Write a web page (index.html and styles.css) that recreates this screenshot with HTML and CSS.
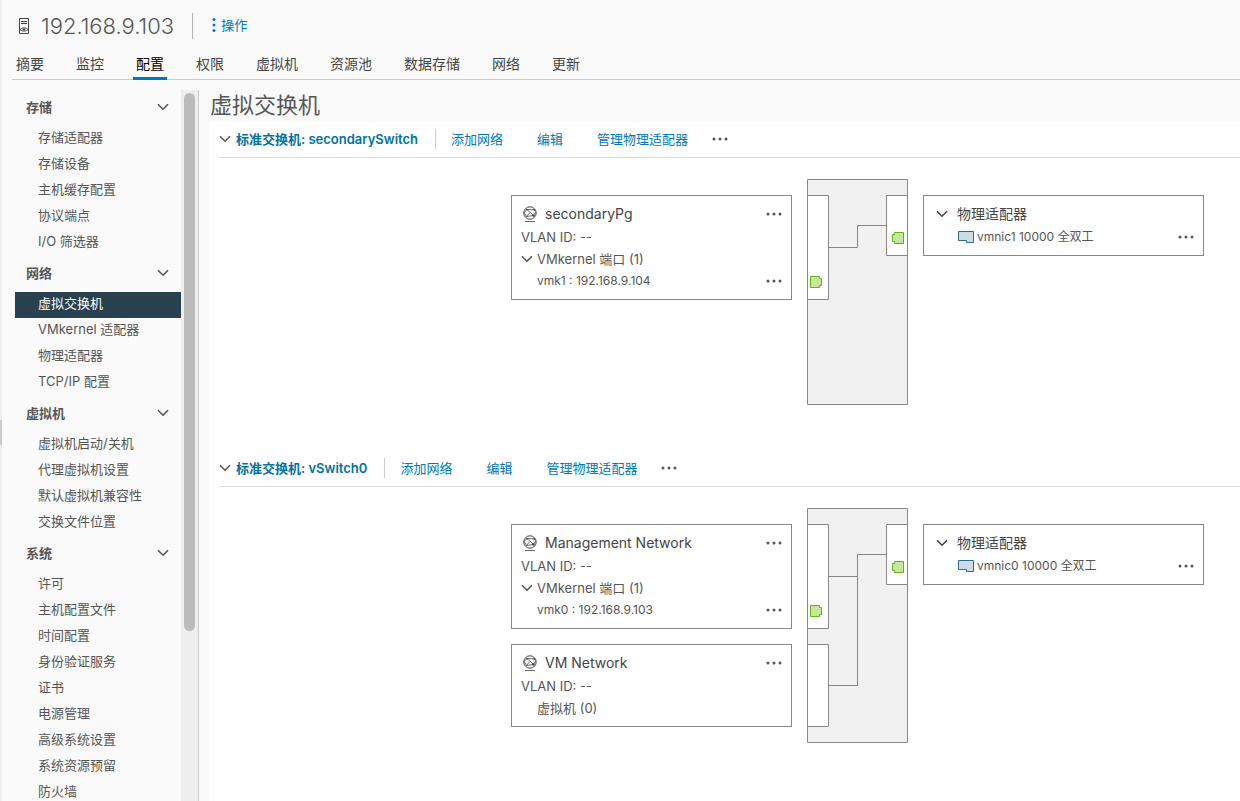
FILE: index.html
```html
<!DOCTYPE html>
<html lang="zh-CN">
<head>
<meta charset="utf-8">
<title>192.168.9.103 - 虚拟交换机</title>
<link rel="stylesheet" href="styles.css">
</head>
<body>
<svg class="defs" aria-hidden="true">
  <symbol id="chevron" viewBox="0 0 12 8"><path d="M1 1.2 6 6.2 11 1.2" fill="none" stroke="currentColor" stroke-width="1.6"/></symbol>
  <symbol id="dots" viewBox="0 0 16 4"><circle cx="2" cy="2" r="1.5"/><circle cx="8" cy="2" r="1.5"/><circle cx="14" cy="2" r="1.5"/></symbol>
  <symbol id="net" viewBox="0 0 16 16"><g fill="none" stroke="currentColor"><circle cx="8" cy="7" r="6.2" stroke-width="1"/><path d="M2 6.500 5 3.500 11.500 9.500M5 3.500 12.500 3.800M2 6.500 4.500 10.500 11.500 9.500 13.800 6M4.500 10.500 8 6.500" stroke-width=".8"/><path d="M3 15.500h10" stroke-width=".8"/></g><g fill="currentColor"><circle cx="5" cy="3.600" r=".9"/><circle cx="12.300" cy="4" r=".9"/><circle cx="11.500" cy="9.500" r="1.200"/></g></symbol>
  <symbol id="nic" viewBox="0 0 16 12"><path d="M.5.5h15v11H8.5v-2h-8z" fill="#cddce4" stroke="#2d6d8d"/></symbol>
  <symbol id="port" viewBox="0 0 12 12"><path d="M.5.5h9v2h2v7h-2v2h-9z" fill="#c7e59c" stroke="#60b515"/></symbol>
</svg>
<div class="app">
  <div class="edge"><span class="edge-grip"></span></div>
  <header class="head">
    <svg class="host-icon" viewBox="0 0 12 18" aria-hidden="true"><g fill="none" stroke="#454545"><path d="M1.500 1.500h9v15h-9z"/><path d="M3 4.500h6M3 6.500h6"/><path d="M1.800 12.500Q6 9 10.200 12.500 6 16 1.800 12.500z" stroke-width=".8"/></g><circle cx="6" cy="12.500" r="1.300" fill="#454545"/></svg>
    <h1>192.168.9.103</h1>
    <button class="actions" type="button"><svg viewBox="0 0 4 16" aria-hidden="true"><circle cx="2" cy="2.500" r="1.500"/><circle cx="2" cy="8" r="1.500"/><circle cx="2" cy="13.500" r="1.500"/></svg>操作</button>
  </header>
  <nav class="tabs">
    <button type="button">摘要</button>
    <button type="button">监控</button>
    <button type="button" class="active">配置</button>
    <button type="button">权限</button>
    <button type="button">虚拟机</button>
    <button type="button">资源池</button>
    <button type="button">数据存储</button>
    <button type="button">网络</button>
    <button type="button">更新</button>
  </nav>
  <div class="body">
    <aside class="side">
      <nav class="tree">
        <button type="button" class="group">存储<svg class="chev"><use href="#chevron"/></svg></button>
        <a href="#">存储适配器</a><a href="#">存储设备</a><a href="#">主机缓存配置</a><a href="#">协议端点</a><a href="#">I/O 筛选器</a>
        <button type="button" class="group">网络<svg class="chev"><use href="#chevron"/></svg></button>
        <a href="#" class="selected">虚拟交换机</a><a href="#">VMkernel 适配器</a><a href="#">物理适配器</a><a href="#">TCP/IP 配置</a>
        <button type="button" class="group">虚拟机<svg class="chev"><use href="#chevron"/></svg></button>
        <a href="#">虚拟机启动/关机</a><a href="#">代理虚拟机设置</a><a href="#">默认虚拟机兼容性</a><a href="#">交换文件位置</a>
        <button type="button" class="group">系统<svg class="chev"><use href="#chevron"/></svg></button>
        <a href="#">许可</a><a href="#">主机配置文件</a><a href="#">时间配置</a><a href="#">身份验证服务</a><a href="#">证书</a><a href="#">电源管理</a><a href="#">高级系统设置</a><a href="#">系统资源预留</a><a href="#">防火墙</a>
      </nav>
      <div class="track"><div class="thumb"></div></div>
    </aside>
    <main class="main">
      <h2>虚拟交换机</h2>
      <div class="panel">
        <section class="switch">
          <div class="bar">
            <button type="button" class="name"><svg class="chev"><use href="#chevron"/></svg>标准交换机: secondarySwitch</button>
            <div class="links">
              <button type="button">添加网络</button>
              <button type="button">编辑</button>
              <button type="button">管理物理适配器</button>
              <button type="button" class="more" aria-label="更多"><svg class="dots"><use href="#dots"/></svg></button>
            </div>
          </div>
          <div class="diagram">
            <div class="cards">
              <article class="card">
                <h3><svg class="net"><use href="#net"/></svg>secondaryPg<button type="button" class="more" aria-label="更多"><svg class="dots"><use href="#dots"/></svg></button></h3>
                <p>VLAN ID: --</p>
                <p><svg class="chev"><use href="#chevron"/></svg>VMkernel 端口 (1)</p>
                <p class="port small">vmk1 : 192.168.9.104<button type="button" class="more" aria-label="更多"><svg class="dots"><use href="#dots"/></svg></button></p>
              </article>
            </div>
            <svg class="fabric fabric-short" viewBox="0 0 101 226" aria-hidden="true">
              <g class="outline"><path class="case" d="M.5.5h100v225H.5z"/><path class="slot" d="M.5 16.500h21v104H.5zM100.500 16.500h-21v60h21z"/><path class="wire" d="M21.500 68.500h29v-22h29"/></g>
              <use href="#port" x="3" y="97" width="12" height="12"/>
              <use href="#port" transform="translate(97 53) scale(-1 1)" width="12" height="12"/>
            </svg>
            <div class="cards">
              <article class="card">
                <h3 class="adapters"><svg class="chev"><use href="#chevron"/></svg>物理适配器</h3>
                <p class="nic-row small"><svg class="nic"><use href="#nic"/></svg>vmnic1 10000 全双工<button type="button" class="more" aria-label="更多"><svg class="dots"><use href="#dots"/></svg></button></p>
              </article>
            </div>
          </div>
        </section>
        <section class="switch">
          <div class="bar">
            <button type="button" class="name"><svg class="chev"><use href="#chevron"/></svg>标准交换机: vSwitch0</button>
            <div class="links">
              <button type="button">添加网络</button>
              <button type="button">编辑</button>
              <button type="button">管理物理适配器</button>
              <button type="button" class="more" aria-label="更多"><svg class="dots"><use href="#dots"/></svg></button>
            </div>
          </div>
          <div class="diagram">
            <div class="cards">
              <article class="card">
                <h3><svg class="net"><use href="#net"/></svg>Management Network<button type="button" class="more" aria-label="更多"><svg class="dots"><use href="#dots"/></svg></button></h3>
                <p>VLAN ID: --</p>
                <p><svg class="chev"><use href="#chevron"/></svg>VMkernel 端口 (1)</p>
                <p class="port small">vmk0 : 192.168.9.103<button type="button" class="more" aria-label="更多"><svg class="dots"><use href="#dots"/></svg></button></p>
              </article>
              <article class="card">
                <h3><svg class="net"><use href="#net"/></svg>VM Network<button type="button" class="more" aria-label="更多"><svg class="dots"><use href="#dots"/></svg></button></h3>
                <p>VLAN ID: --</p>
                <p class="port">虚拟机 (0)</p>
              </article>
            </div>
            <svg class="fabric fabric-tall" viewBox="0 0 101 235" aria-hidden="true">
              <g class="outline"><path class="case" d="M.5.5h100v234H.5z"/><path class="slot" d="M.5 16.500h21v104H.5zM.5 136.500h21v82H.5zM100.500 16.500h-21v60h21z"/><path class="wire" d="M21.500 68.500h29M21.500 177.500h29v-131h29"/></g>
              <use href="#port" x="3" y="97" width="12" height="12"/>
              <use href="#port" transform="translate(97 53) scale(-1 1)" width="12" height="12"/>
            </svg>
            <div class="cards">
              <article class="card">
                <h3 class="adapters"><svg class="chev"><use href="#chevron"/></svg>物理适配器</h3>
                <p class="nic-row small"><svg class="nic"><use href="#nic"/></svg>vmnic0 10000 全双工<button type="button" class="more" aria-label="更多"><svg class="dots"><use href="#dots"/></svg></button></p>
              </article>
            </div>
          </div>
        </section>
      </div>
    </main>
  </div>
</div>
</body>
</html>
```
FILE: styles.css
```css
* { box-sizing: border-box; }
body {
  margin: 0;
  background: #fafafa;
  color: #565656;
  font: 13px/22px Inter, "Noto Sans CJK SC", sans-serif;
}
h1, h2, h3, p { margin: 0; font-weight: 400; }
button {
  border: 0;
  padding: 0;
  background: none;
  color: inherit;
  font: inherit;
  cursor: pointer;
}
a { color: inherit; text-decoration: none; }
svg { flex: none; }
.defs { display: none; }
.chev { width: 12px; height: 8px; }
.dots { display: block; width: 16px; height: 4px; fill: #565656; }
.net { width: 16px; height: 16px; margin-right: 7px; }
.nic { width: 16px; height: 12px; margin-right: 3px; }

.app {
  position: relative;
  display: flex;
  flex-direction: column;
  height: 100vh;
  overflow: hidden;
}
.edge {
  position: absolute;
  inset: 0 auto 0 0;
  display: flex;
  align-items: center;
  width: 2px;
  padding-top: 64px;
  background: #eee;
}
.edge-grip { width: 2px; height: 25px; background: #ccc; }

.head { display: flex; align-items: center; height: 50px; padding: 2px 18px 0; }
.host-icon { width: 12px; height: 18px; margin-right: 11px; }
h1 { font-size: 22px; line-height: 26px; font-weight: 300; }
.actions {
  display: flex;
  align-items: center;
  gap: 5px;
  height: 26px;
  margin-left: 18px;
  padding: 0 0 2px 19px;
  border-left: 1px solid #b3b3b3;
  color: #0079b8;
}
.actions svg { width: 4px; height: 16px; fill: currentColor; }

.tabs {
  display: flex;
  gap: 26px;
  height: 30px;
  margin-left: 12px;
  padding-left: 1px;
  border-bottom: 1px solid #ccc;
  flex: none;
}
.tabs button {
  height: 30px;
  padding: 0 3px;
  border-bottom: 3px solid transparent;
  font-size: 14px;
  line-height: 27px;
  color: #454545;
}
.tabs .active { border-color: #0079b8; color: #000; }

.body { display: flex; flex: 1; min-height: 0; padding-top: 10px; }
.side { display: flex; flex: none; width: 199px; padding-left: 15px; border-right: 1px solid #ccc; }
.tree { flex: 1; overflow: hidden; }
.tree a { display: block; height: 26px; padding-left: 23px; }
.tree .selected { background: #29404f; color: #fff; }
.group {
  display: flex;
  align-items: center;
  justify-content: space-between;
  width: 100%;
  height: 36px;
  padding: 0 12px 2px 11px;
  font-weight: 600;
}
.track { width: 17px; padding: 3px 3px 0; background: #eee; }
.thumb { width: 11px; height: 76%; border-radius: 6px; background: #bbb; }

.main { flex: 1; min-width: 0; display: flex; flex-direction: column; padding-left: 10px; }
h2 { height: 32px; padding-left: 1px; font-size: 22px; line-height: 30px; }
.panel { flex: 1; padding-left: 10px; background: #fff; }
.switch { min-height: 329px; }
.bar { display: flex; align-items: center; height: 36px; padding-bottom: 2px; border-bottom: 1px solid #ddd; }
.name { display: flex; align-items: center; gap: 5px; color: #0072a3; font-weight: 600; }
.name .chev { color: #565656; }
.links {
  display: flex;
  align-items: center;
  gap: 34px;
  height: 20px;
  margin-left: 17px;
  padding-left: 15px;
  border-left: 1px solid #ccc;
  color: #0079b8;
}
.links .more { margin-left: -10px; }

.diagram { display: flex; justify-content: flex-end; align-items: flex-start; gap: 15px; padding: 21px 36px 0 0; }
.cards { display: flex; flex-direction: column; gap: 15px; padding-top: 16px; }
.card { width: 281px; padding: 5px 9px 7px; border: 1px solid #888; }
.card h3, .card p { display: flex; align-items: center; }
.card h3 { height: 25px; padding-left: 1px; font-size: 14px; color: #454545; }
.card p { height: 22px; }
.card .small { font-size: 12px; }
.card .more { margin-left: auto; }
.card .chev { margin-right: 4px; }
.card .port { padding-left: 16px; }
.card .adapters { padding-left: 3px; }
.card .adapters .chev { margin-right: 9px; }
.card .nic-row { padding-left: 25px; }
.fabric { width: 101px; }
.fabric-short { height: 226px; }
.fabric-tall { height: 235px; }
.outline { stroke: #888; }
.case { fill: #f1f1f1; }
.slot { fill: #fff; }
.wire { fill: none; }
```
